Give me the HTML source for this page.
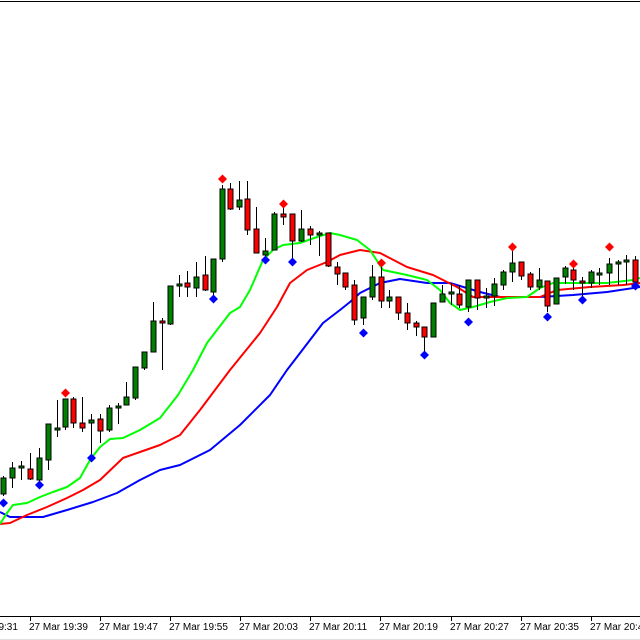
<!DOCTYPE html>
<html><head><meta charset="utf-8"><style>
html,body{margin:0;padding:0;background:#fff;width:640px;height:640px;overflow:hidden}
svg{display:block}
text{font-family:"Liberation Sans",sans-serif;font-size:10px;fill:#000}
</style></head><body>
<svg id="s" width="640" height="640" viewBox="0 0 640 640">
<rect x="0" y="0" width="640" height="640" fill="#fff"/>
<line x1="0" y1="1.5" x2="640" y2="1.5" stroke="#000" stroke-width="1"/>
<line x1="0" y1="616.5" x2="640" y2="616.5" stroke="#000" stroke-width="1"/>
<line x1="0" y1="639.5" x2="640" y2="639.5" stroke="#e0e0e0" stroke-width="1"/>
<g stroke="#000" stroke-width="1" shape-rendering="crispEdges">
<line x1="30.5" y1="616" x2="30.5" y2="621"/><line x1="100.5" y1="616" x2="100.5" y2="621"/>
<line x1="170.5" y1="616" x2="170.5" y2="621"/><line x1="240.5" y1="616" x2="240.5" y2="621"/>
<line x1="310.5" y1="616" x2="310.5" y2="621"/><line x1="380.5" y1="616" x2="380.5" y2="621"/>
<line x1="451.5" y1="616" x2="451.5" y2="621"/><line x1="521.5" y1="616" x2="521.5" y2="621"/>
<line x1="591.5" y1="616" x2="591.5" y2="621"/>
</g>
<g>
<text x="-41" y="630">27 Mar 19:31</text>
<text x="29" y="630">27 Mar 19:39</text>
<text x="99" y="630">27 Mar 19:47</text>
<text x="169" y="630">27 Mar 19:55</text>
<text x="239" y="630">27 Mar 20:03</text>
<text x="309" y="630">27 Mar 20:11</text>
<text x="379" y="630">27 Mar 20:19</text>
<text x="450" y="630">27 Mar 20:27</text>
<text x="520" y="630">27 Mar 20:35</text>
<text x="590" y="630">27 Mar 20:43</text>
</g>
<g fill="none" stroke-width="2" stroke-linejoin="round">
<polyline stroke="#0000ff" points="0,512 10,517 23,517 43,517 67,510 93,502 117,493 140,480 160,470 180,465 210,450 240,425 270,395 287,370 297,357 323,323 340,310 350,302 360,293 380,283 400,279 427,283 450,283 480,292 500,297 540,297 573,295 607,292 640,287"/>
<polyline stroke="#ff0000" points="0,524 10,523 27,515 47,507 67,498 83,490 100,480 123,458 140,452 160,445 180,435 200,410 230,370 260,333 277,307 290,283 307,270 327,262 340,255 360,250 380,253 407,267 433,275 457,287 473,297 507,297 540,297 557,290 590,287 623,285 640,283"/>
<polyline stroke="#00ff00" points="0,524 7,513 13,505 27,503 40,497 53,492 67,487 80,478 90,460 100,447 110,439 123,438 140,430 160,418 178,395 193,370 207,343 230,313 240,307 250,290 263,260 273,250 283,245 300,243 317,237 330,233 340,235 357,240 370,250 383,270 407,275 427,280 440,290 450,303 460,310 473,307 490,302 507,298 527,297 540,288 553,283 573,283 607,283 633,280 640,278"/>
</g>
<g id="c"></g>
</svg>
<script>
// x, color(g/r), bodyTop, bodyBot, wickTop, wickBot, diamond ('b' y / 'r' y)
var C=[
[3,'g',478,494,476,496,'b',503],
[12,'g',468,478,462,488],
[21,'g',466,468,461,480],
[30,'r',469,479,453,480],
[39,'g',458,480,448,488,'b',485],
[48,'g',424,460,424,470],
[57,'g',428,430,400,437],
[65,'g',399,427,399,430,'r',393],
[73,'r',399,423,397,428],
[82,'r',423,428,397,432],
[91,'g',420,423,414,458,'b',458],
[100,'r',419,431,414,443],
[109,'g',408,430,405,432],
[118,'g',406,408,403,424],
[126,'g',397,405,382,405],
[135,'g',367,398,367,400],
[144,'g',352,368,352,370],
[153,'g',321,352,302,352],
[162,'r',321,323,318,370],
[170,'g',286,324,286,325],
[179,'g',284,286,275,297],
[187,'r',283,287,271,297],
[196,'g',277,288,262,297],
[205,'r',275,290,256,291],
[213,'g',259,292,259,295,'b',299],
[222,'g',189,259,185,262,'r',179],
[230,'r',189,209,183,210],
[239,'g',200,207,181,210],
[247,'r',199,230,181,235],
[256,'r',229,253,207,253],
[265,'g',251,255,238,258,'b',260],
[274,'g',214,250,212,250],
[283,'r',214,217,205,225,'r',204],
[292,'r',214,241,214,258,'b',262],
[301,'g',229,241,210,242],
[310,'r',229,235,226,245],
[319,'g',233,235,231,256],
[328,'r',233,266,233,267],
[337,'r',267,274,262,285],
[345,'r',273,287,273,290],
[354,'r',285,320,280,325],
[363,'g',297,318,297,325,'b',333],
[372,'g',277,297,265,300],
[381,'r',277,301,267,308,'r',263],
[389,'g',297,301,290,308],
[398,'r',297,313,297,320],
[407,'r',313,323,303,330],
[416,'r',323,327,321,336],
[424,'r',327,337,327,355,'b',355],
[433,'g',303,337,303,337],
[442,'g',294,302,285,302],
[451,'g',292,294,283,305],
[459,'r',294,305,285,308],
[468,'g',280,307,280,312,'b',322],
[477,'r',280,298,280,310],
[486,'g',296,298,288,308],
[494,'g',284,296,278,306],
[503,'g',272,285,270,290],
[512,'g',263,272,251,282,'r',247],
[521,'r',262,276,262,280],
[530,'r',274,287,272,290],
[539,'g',280,287,268,290],
[547,'r',281,306,281,312,'b',317],
[556,'g',278,304,278,304],
[565,'g',268,277,266,284],
[573,'r',270,280,265,290,'r',264],
[582,'r',281,283,277,298,'b',300],
[591,'g',272,283,270,288],
[599,'g',273,275,268,285],
[609,'g',264,273,258,285,'r',247],
[618,'g',262,264,260,285],
[626,'g',260,262,255,285],
[635,'r',260,282,256,285,'b',286]
];
var h='';
C.forEach(function(c){
 var x=c[0];
 h+='<line x1="'+(x+.5)+'" y1="'+c[4]+'" x2="'+(x+.5)+'" y2="'+c[5]+'" stroke="#000" stroke-width="1" shape-rendering="crispEdges"/>';
 var bh=Math.max(2,c[3]-c[2]);
 h+='<rect x="'+(x-2)+'" y="'+c[2]+'" width="5" height="'+bh+'" fill="'+(c[1]=='g'?'#008000':'#ff0000')+'" stroke="#000" stroke-width="1" shape-rendering="crispEdges"/>';
 if(c[6]){var y=c[7],col=c[6]=='b'?'#0000ff':'#ff0000';
  h+='<polygon points="'+(x+.5)+','+(y-4.5)+' '+(x+5)+','+y+' '+(x+.5)+','+(y+4.5)+' '+(x-4)+','+y+'" fill="'+col+'"/>';}
});
document.getElementById('c').innerHTML=h;
</script>
</body></html>
